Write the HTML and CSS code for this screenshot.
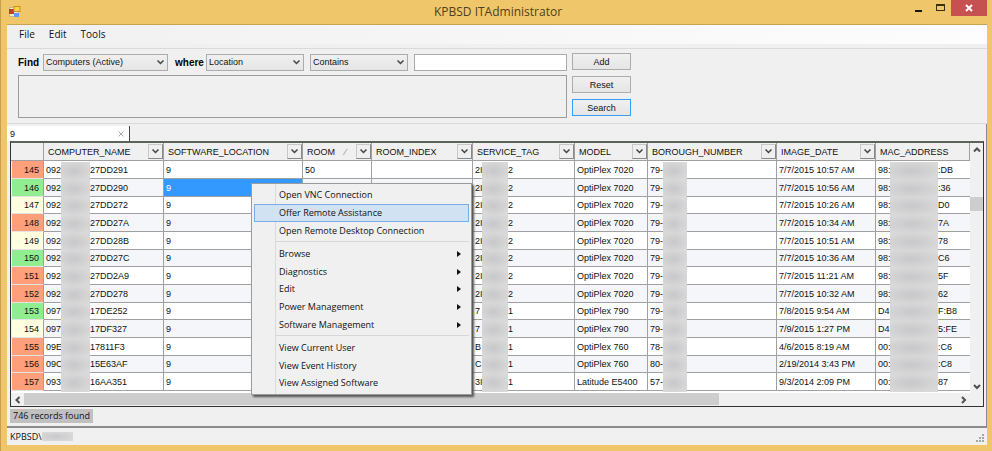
FILE: index.html
```html
<!DOCTYPE html>
<html lang="en">
<head>
    <meta charset="UTF-8">
    <meta name="viewport" content="width=device-width, initial-scale=1.0">
    <title>KPBSD ITAdministrator</title>
    <link rel="stylesheet" href="styles.css">
</head>
<body>
    <div class="window">
        <header class="titlebar">
            <svg class="app-icon" width="12" height="12" viewBox="0 0 12 12">
                <rect x="0.5" y="1.5" width="9" height="9" fill="#f4e6c8" stroke="#c9b78c"/>
                <rect x="0" y="3" width="5" height="5" fill="#c43a2c"/>
                <rect x="5" y="0.5" width="6" height="5" fill="#f8d24a" stroke="#c79218"/>
                <rect x="5" y="7" width="5" height="4" fill="#5a9cf5"/>
            </svg>
            <h1>KPBSD ITAdministrator</h1>
            <div class="window-buttons">
                <button type="button" aria-label="Minimize">
                    <svg width="8" height="8"><rect x="1" y="6" width="7" height="2" fill="#1c1608"/></svg>
                </button>
                <button type="button" aria-label="Maximize">
                    <svg width="9" height="8"><path d="M0 0h9v7H0zM1 2v4h7V2z" fill="#3a2f12" fill-rule="evenodd"/></svg>
                </button>
                <button type="button" class="close" aria-label="Close">
                    <svg width="8" height="8"><path d="M1 1l6 6M7 1L1 7" stroke="#fff" stroke-width="2"/></svg>
                </button>
            </div>
        </header>

        <main class="client">
            <nav class="menubar">
                <button type="button">File</button>
                <button type="button">Edit</button>
                <button type="button">Tools</button>
            </nav>

            <form class="search">
                <div class="criteria">
                    <div class="criteria-row">
                        <label class="find" for="find">Find</label>
                        <span class="combo combo-wide">
                            <select id="find"><option>Computers (Active)</option></select>
                            <svg width="7" height="5"><path d="M0.5 0.5l3 3 3-3" /></svg>
                        </span>
                        <label class="where" for="where">where</label>
                        <span class="combo">
                            <select id="where"><option>Location</option></select>
                            <svg width="7" height="5"><path d="M0.5 0.5l3 3 3-3" /></svg>
                        </span>
                        <span class="combo">
                            <select id="operator" aria-label="Operator"><option>Contains</option></select>
                            <svg width="7" height="5"><path d="M0.5 0.5l3 3 3-3" /></svg>
                        </span>
                        <input class="value" type="text" aria-label="Value">
                    </div>
                    <div class="criteria-list"></div>
                </div>
                <div class="actions">
                    <button type="button">Add</button>
                    <button type="button">Reset</button>
                    <button type="button" class="default">Search</button>
                </div>
            </form>

            <section class="results">
                <div class="tab">
                    <span>9</span>
                    <button type="button" aria-label="Close tab">
                        <svg width="6" height="6"><path d="M0.5 0.5l5 5M5.5 0.5l-5 5" stroke="#a8a8a8"/></svg>
                    </button>
                </div>

                <div class="grid">
                    <div class="table-wrap">
                        <table>
                            <colgroup>
                                <col class="c-num"><col class="c-name"><col class="c-soft"><col class="c-room">
                                <col class="c-index"><col class="c-tag"><col class="c-model"><col class="c-borough">
                                <col class="c-date"><col>
                            </colgroup>
                            <thead><tr id="head"></tr></thead>
                            <tbody id="rows"></tbody>
                        </table>
                    </div>
                    <div class="vscroll">
                        <button type="button" aria-label="Scroll up"><svg width="8" height="6"><path d="M1 4.5l3-3 3 3"/></svg></button>
                        <div class="thumb"></div>
                        <button type="button" aria-label="Scroll down"><svg width="8" height="6"><path d="M1 1l3 3 3-3"/></svg></button>
                    </div>
                    <div class="hscroll">
                        <button type="button" aria-label="Scroll left"><svg width="6" height="8"><path d="M4.5 1l-3 3 3 3"/></svg></button>
                        <div class="track"><div class="thumb"></div></div>
                        <button type="button" aria-label="Scroll right"><svg width="6" height="8"><path d="M1 1l3 3-3 3"/></svg></button>
                    </div>
                </div>

                <div class="summary"><span>746 records found</span></div>
            </section>

            <footer class="statusbar">
                <span>KPBSD\</span><span class="mask mask-user"></span>
                <svg class="grip" width="9" height="9" fill="#a5a5a5">
                    <path d="M6 0h2v2H6zM3 3h2v2H3zM6 3h2v2H6zM0 6h2v2H0zM3 6h2v2H3zM6 6h2v2H6z"/>
                </svg>
            </footer>
        </main>

        <ul class="context-menu">
            <li><button type="button">Open VNC Connection</button></li>
            <li class="active"><button type="button">Offer Remote Assistance</button></li>
            <li><button type="button">Open Remote Desktop Connection</button></li>
            <li class="separator"></li>
            <li class="sub"><button type="button">Browse</button></li>
            <li class="sub"><button type="button">Diagnostics</button></li>
            <li class="sub"><button type="button">Edit</button></li>
            <li class="sub"><button type="button">Power Management</button></li>
            <li class="sub"><button type="button">Software Management</button></li>
            <li class="separator"></li>
            <li><button type="button">View Current User</button></li>
            <li><button type="button">View Event History</button></li>
            <li><button type="button">View Assigned Software</button></li>
        </ul>
    </div>

    <script>
        var columns = ["COMPUTER_NAME", "SOFTWARE_LOCATION", "ROOM", "ROOM_INDEX", "SERVICE_TAG",
            "MODEL", "BOROUGH_NUMBER", "IMAGE_DATE", "MAC_ADDRESS"];

        // number, state, name start, name end, room, tag start, tag end, model, borough, date, mac start, mac end
        var rows = [
            [145, "red", "092", "27DD291", "50", "2I", "2", "OptiPlex 7020", "79-", "7/7/2015 10:57 AM", "98:", ":DB"],
            [146, "green", "092", "27DD290", "", "2I", "2", "OptiPlex 7020", "79-", "7/7/2015 10:56 AM", "98:", ":36"],
            [147, "yellow", "092", "27DD272", "", "2I", "2", "OptiPlex 7020", "79-", "7/7/2015 10:26 AM", "98:", "D0"],
            [148, "red", "092", "27DD27A", "", "2I", "2", "OptiPlex 7020", "79-", "7/7/2015 10:34 AM", "98:", "7A"],
            [149, "yellow", "092", "27DD28B", "", "2I", "2", "OptiPlex 7020", "79-", "7/7/2015 10:51 AM", "98:", "78"],
            [150, "green", "092", "27DD27C", "", "2I", "2", "OptiPlex 7020", "79-", "7/7/2015 10:36 AM", "98:", "C6"],
            [151, "red", "092", "27DD2A9", "", "2I", "2", "OptiPlex 7020", "79-", "7/7/2015 11:21 AM", "98:", "5F"],
            [152, "red", "092", "27DD278", "", "2I", "2", "OptiPlex 7020", "79-", "7/7/2015 10:32 AM", "98:", "62"],
            [153, "green", "097", "17DE252", "", "7", "1", "OptiPlex 790", "79-", "7/8/2015 9:54 AM", "D4", "F:B8"],
            [154, "yellow", "097", "17DF327", "", "7", "1", "OptiPlex 790", "79-", "7/9/2015 1:27 PM", "D4", "5:FE"],
            [155, "red", "09E", "17811F3", "", "B", "1", "OptiPlex 760", "78-", "4/6/2015 8:19 AM", "00:", ":C6"],
            [156, "red", "09C", "15E63AF", "", "C", "1", "OptiPlex 760", "80-", "2/19/2014 3:43 PM", "00:", ":C8"],
            [157, "red", "093", "16AA351", "", "3I", "1", "Latitude E5400", "57-", "9/3/2014 2:09 PM", "00:", "87"]
        ];

        function masked(type, start, end) {
            return `<td><div class="masked ${type}"><span class="start">${start}</span><span class="mask"></span><span class="end">${end}</span></div></td>`;
        }

        var head = "<th></th>";
        columns.forEach(function(name) {
            var sort = name === "ROOM" ? '<span class="sort">&#8725;</span>' : "";
            var filter = name === "MAC_ADDRESS" ? "" :
                `<button type="button" class="filter" aria-label="Filter ${name}"><svg width="7" height="5"><path d="M0.5 0.5l3 3 3-3"/></svg></button>`;
            head += `<th scope="col"><div class="th">${name}${sort}${filter}</div></th>`;
        });
        document.getElementById("head").innerHTML = head;

        document.getElementById("rows").innerHTML = rows.map(function(r) {
            return `<tr>
                <th scope="row" class="${r[1]}">${r[0]}</th>
                ${masked("name", r[2], r[3])}
                <td class="${r[0] === 146 ? "selected" : ""}">9</td>
                <td>${r[4]}</td>
                <td></td>
                ${masked("tag", r[5], r[6])}
                <td>${r[7]}</td>
                ${masked("borough", r[8], "")}
                <td>${r[9]}</td>
                ${masked("mac", r[10], r[11])}
            </tr>`;
        }).join("");
    </script>
</body>
</html>
```
FILE: styles.css
```css
* {
    box-sizing: border-box;
}

body {
    margin: 0;
    font-family: "Liberation Sans", Arial, sans-serif;
    font-size: 9px;
    color: #111;
}

button, select, input {
    font: inherit;
    color: inherit;
    margin: 0;
    padding: 0;
}

svg {
    display: block;
    flex: none;
}

.window {
    position: relative;
    display: flex;
    flex-direction: column;
    min-height: 100vh;
    padding: 0 5px 6px 6px;
    background-color: #efc76a;
    border-left: 1px solid #c99f4c;
}

/* title bar */
.titlebar {
    display: grid;
    grid-template-columns: 1fr auto 1fr;
    align-items: center;
    height: 24px;
    padding-left: 2px;
}

.titlebar h1 {
    margin: 0;
    font: 12px/24px "Open Sans", sans-serif;
    color: #4c3f22;
}

.window-buttons {
    display: flex;
    align-self: start;
    justify-content: flex-end;
}

.window-buttons button {
    display: flex;
    align-items: center;
    justify-content: center;
    width: 22px;
    height: 16px;
    border: 0;
    background: none;
}

.window-buttons .close {
    width: 36px;
    background-color: #c75050;
}

/* client area */
.client {
    display: flex;
    flex-direction: column;
    flex: 1;
    background-color: #f0f0f0;
    border-top: 1px solid #c9a450;
}

.menubar {
    display: flex;
    height: 24px;
    padding: 0 0 5px 5px;
    background: linear-gradient(to right, #f0f0f0, #fdfdfd) no-repeat 0 0 / 100% 19px;
    border-bottom: 1px solid #dadada;
}

.menubar button {
    padding: 0 7px;
    border: 0;
    background: none;
    font: 10px/18px "Open Sans", sans-serif;
}

.search {
    display: flex;
    gap: 5px;
    height: 75px;
    padding: 4px 11px;
    border-bottom: 1px solid #dadada;
}

.criteria {
    display: flex;
    flex-direction: column;
    gap: 4px;
    width: 549px;
}

.criteria-row {
    display: flex;
    align-items: center;
    height: 18px;
}

.criteria-row label {
    font-size: 10px;
    font-weight: bold;
    color: #000;
}

.find {
    width: 25px;
}

.where {
    width: 38px;
    padding-left: 7px;
}

.combo {
    position: relative;
    width: 98px;
    margin-right: 6px;
}

.combo-wide {
    width: 125px;
    margin-right: 0;
}

.combo select {
    display: block;
    width: 100%;
    height: 17px;
    padding: 0 2px;
    border: 1px solid #acacac;
    background: linear-gradient(#f0f0f0, #e5e5e5);
    appearance: none;
}

.combo svg {
    position: absolute;
    top: 6px;
    right: 4px;
    pointer-events: none;
}

.combo path, .filter path {
    fill: none;
    stroke: #444;
    stroke-width: 1.5;
}

.value {
    flex: 1;
    min-width: 0;
    height: 17px;
    border: 1px solid #ababab;
    background-color: #fff;
}

.criteria-list {
    height: 43px;
    border: 1px solid #9c9c9c;
}

.actions {
    display: flex;
    flex-direction: column;
    gap: 6px;
}

.actions button {
    width: 59px;
    height: 17px;
    border: 1px solid #acacac;
    background: linear-gradient(#f0f0f0, #e5e5e5);
}

.actions .default {
    border-color: #3c9bf5;
}

/* results */
.results {
    display: flex;
    flex-direction: column;
    flex: 1;
    padding: 2px 1px 0 0;
    border-bottom: 2px solid #8a8a8a;
    border-right: 1px solid #8a8a8a;
}

.tab {
    display: flex;
    align-items: center;
    justify-content: space-between;
    width: 123px;
    height: 15px;
    padding: 0 5px 0 3px;
    background-color: #fff;
    border-right: 1px solid #444;
}

.tab button {
    border: 0;
    background: none;
}

.grid {
    display: grid;
    grid-template-columns: 1fr 13px;
    grid-template-rows: 250px 13px;
    margin: 0 1px 0 3px;
    border: 1px solid #333;
    border-top: 2px solid #5c645a;
}

.table-wrap {
    overflow: hidden;
    background-color: #fff;
}

table {
    width: 100%;
    table-layout: fixed;
    border-collapse: separate;
    border-spacing: 0;
}

.c-num { width: 33px; }
.c-name { width: 120px; }
.c-soft { width: 139px; }
.c-room { width: 69px; }
.c-index { width: 101px; }
.c-tag { width: 102px; }
.c-model { width: 73px; }
.c-borough { width: 129px; }
.c-date { width: 99px; }

th, td {
    height: 18px;
    padding: 0 0 0 2px;
    border: 0 solid #a0a0a0;
    border-width: 0 1px 1px 0;
    line-height: 16px;
    font-weight: normal;
    text-align: left;
    white-space: nowrap;
}

thead th {
    padding: 0 0 0 4px;
    background-color: #f0f0f0;
}

tbody tr:nth-child(3n) > * {
    height: 17px;
}

tbody tr:nth-child(even) td {
    background-color: #f4f6f9;
}

tbody td:last-child {
    border-right: 0;
}

tbody th {
    padding-right: 4px;
    border-left: 1px solid #f0f0f0;
    border-bottom-color: #e4e4e4;
    text-align: right;
}

.red { background-color: #ffa07a; }
.green { background-color: #90ee90; }
.yellow { background-color: #ffffe0; }

tbody tr:nth-child(even) .selected {
    background-color: #3399ff;
    color: #fff;
}

.th {
    display: flex;
    align-items: center;
    justify-content: space-between;
    height: 17px;
}

.sort {
    color: #888;
}

.filter {
    display: flex;
    align-items: center;
    justify-content: center;
    width: 15px;
    height: 15px;
    border: 1px solid #a0a0a0;
    border-color: #c8c8c8 #888 #888 #c8c8c8;
    background-color: #efefef;
}

/* blurred-out part of a value */
.masked {
    display: flex;
    height: 16px;
}

.mask {
    flex: none;
    height: 18px;
    background: radial-gradient(ellipse at 45% 50%, #c8c8ca, #d9d9da 80%);
}

.name .start { width: 15px; }
.name .mask { width: 29px; }
.tag .start { width: 7px; }
.tag .mask { width: 26px; }
.borough .start { width: 13px; }
.borough .mask { width: 24px; }
.mac .start { width: 12px; }
.mac .mask { width: 48px; }

/* scroll bars */
.vscroll, .hscroll {
    display: flex;
    background-color: #f0f0f0;
}

.vscroll {
    flex-direction: column;
}

.hscroll {
    grid-column: 1 / 3;
    padding-right: 13px;
}

.vscroll button, .hscroll button {
    display: flex;
    align-items: center;
    justify-content: center;
    width: 13px;
    height: 13px;
    border: 0;
    background: none;
}

.vscroll path, .hscroll path {
    fill: none;
    stroke: #505050;
    stroke-width: 2;
}

.thumb {
    background-color: #cdcdcd;
}

.vscroll .thumb {
    height: 14px;
    margin: 41px 0 auto;
}

.track {
    flex: 1;
}

.track .thumb {
    width: 74.5%;
    height: 12px;
}

.summary {
    display: flex;
    padding: 2px 3px 3px;
}

.summary span {
    padding: 0 3px;
    background-color: #c0c0c0;
    font: 9px/14px "Open Sans", sans-serif;
}

.statusbar {
    display: flex;
    align-items: center;
    height: 17px;
    padding: 0 2px 0 3px;
    font: 9px/17px "Open Sans", sans-serif;
}

.mask-user {
    width: 31px;
    height: 9px;
}

.grip {
    margin: auto 0 2px auto;
}

/* context menu */
.context-menu {
    position: absolute;
    top: 183px;
    left: 250px;
    width: 221px;
    margin: 0;
    padding: 2px;
    list-style: none;
    background: linear-gradient(to right, transparent 23px, #dadada 23px, #dadada 24px, transparent 24px), #f0f0f0;
    border: 1px solid #9c9c9c;
    box-shadow: 2px 2px 2px #555;
    font: 9px/16px "Open Sans", sans-serif;
}

.context-menu li {
    position: relative;
    height: 18px;
    border: 1px solid transparent;
}

.context-menu li:nth-child(3n) {
    height: 17px;
}

.context-menu button {
    display: block;
    width: 100%;
    padding-left: 24px;
    border: 0;
    background: none;
    text-align: left;
}

.context-menu .active {
    background-color: #d1e2f2;
    border-color: #78aee5;
}

.context-menu .separator {
    height: 6px;
    margin-left: 22px;
    border: 0;
    background: linear-gradient(#d7d7d7, #d7d7d7) no-repeat 0 2px / 100% 1px;
}

.sub::after {
    content: "";
    position: absolute;
    top: 5px;
    right: 7px;
    border: 3px solid transparent;
    border-left: 4px solid #111;
    border-right: 0;
}
```
